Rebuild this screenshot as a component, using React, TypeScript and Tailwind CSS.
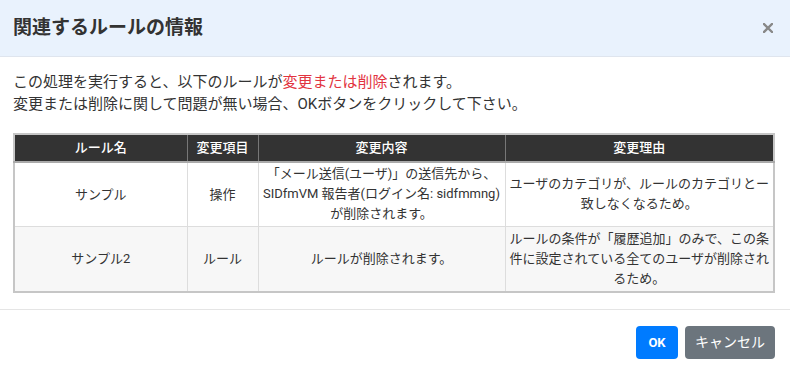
import React from 'react'

type Row = {
  name: string
  item: string
  content: string[]
  reason: string[]
}

const rows: Row[] = [
  {
    name: 'サンプル',
    item: '操作',
    content: ['「メール送信(ユーザ)」の送信先から、', 'SIDfmVM 報告者(ログイン名: sidfmmng)', 'が削除されます。'],
    reason: ['ユーザのカテゴリが、ルールのカテゴリとー', '致しなくなるため。'],
  },
  {
    name: 'サンプル2',
    item: 'ルール',
    content: ['ルールが削除されます。'],
    reason: ['ルールの条件が「履歴追加」のみで、この条', '件に設定されている全てのユーザが削除され', 'るため。'],
  },
]

const Lines: React.FC<{ lines: string[] }> = ({ lines }) => (
  <div className="flex flex-col items-center leading-[20px]">
    {lines.map((l, i) => (
      <span key={i} className="whitespace-nowrap">
        {l}
      </span>
    ))}
  </div>
)

const App: React.FC = () => {
  return (
    <div
      className="w-[790px] h-[371px] bg-white text-[#333]"
      style={{ fontFamily: 'Roboto, "Noto Sans CJK JP", sans-serif' }}
    >
      <div className="h-[57px] bg-[#e9f2fd] border-b border-[#dfe5ee] flex items-center justify-between pl-[13px] pr-[17px]">
        <h2 className="text-[19px] font-bold text-[#333]">関連するルールの情報</h2>
        <button className="w-[10px] h-[10px] flex items-center justify-center">
          <svg width="10" height="10" viewBox="0 0 10 10">
            <path d="M1 1 L9 9 M9 1 L1 9" stroke="#888" strokeWidth="2.4" strokeLinecap="square" />
          </svg>
        </button>
      </div>

      <div className="pl-[13px] pr-[15px] pt-[14px] pb-[16px]">
        <p className="text-[15px] leading-[22px]">
          この処理を実行すると、以下のルールが<span className="text-[#e2343f]">変更または削除</span>されます。
          <br />
          変更または削除に関して問題が無い場合、OKボタンをクリックして下さい。
        </p>

        <table className="mt-[18px] w-full table-fixed border-collapse border-2 border-[#c6c6c6] text-[13px]">
          <colgroup>
            <col className="w-[173px]" />
            <col className="w-[71px]" />
            <col className="w-[247px]" />
            <col />
          </colgroup>
          <thead>
            <tr className="bg-[#333] text-white h-[28px] border-b-2 border-[#aaa]">
              <th className="font-medium border-r border-[#777]">ルール名</th>
              <th className="font-medium border-r border-[#777]">変更項目</th>
              <th className="font-medium border-r border-[#777]">変更内容</th>
              <th className="font-medium">変更理由</th>
            </tr>
          </thead>
          <tbody>
            {rows.map((r, i) => (
              <tr
                key={i}
                className={`${i % 2 === 1 ? 'bg-[#f7f7f7]' : 'bg-white'} ${i === 0 ? 'h-[64px] border-b border-[#ddd]' : 'h-[66px]'}`}
              >
                <td className="text-center border-r border-[#ddd] px-1">{r.name}</td>
                <td className="text-center border-r border-[#ddd] px-1">{r.item}</td>
                <td className="border-r border-[#ddd] px-0">
                  <Lines lines={r.content} />
                </td>
                <td className="px-0">
                  <Lines lines={r.reason} />
                </td>
              </tr>
            ))}
          </tbody>
        </table>
      </div>

      <div className="border-t border-[#e5e5e5] flex justify-end gap-[7px] pr-[15px] pt-[16px]">
        <button className="h-[33px] w-[42px] rounded-[4px] bg-[#007bff] text-white text-[13px] font-bold">
          OK
        </button>
        <button className="h-[33px] w-[90px] rounded-[4px] bg-[#6c757d] text-white text-[14px]">
          キャンセル
        </button>
      </div>
    </div>
  )
}

export default App
